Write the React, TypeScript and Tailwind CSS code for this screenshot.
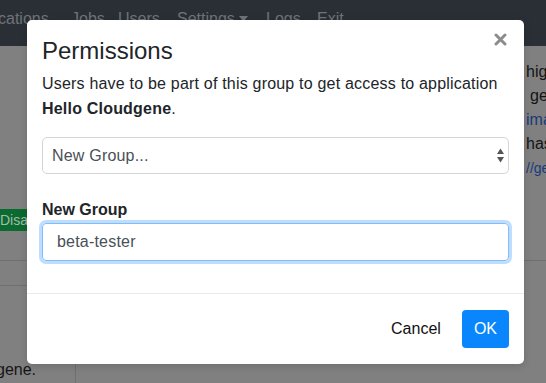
export default function App() {
  return (
    <div className="relative h-[383px] w-[546px] overflow-hidden bg-[#808080] font-['Liberation_Sans',Arial,sans-serif] text-[16px] text-[#141414]">
      <nav className="flex h-[46px] items-start bg-[#2a2f36] pt-[7px] text-[16px] leading-[24px] text-[#6f7378]">
        <span className="-ml-[2px] w-[73px]">cations</span>
        <span className="w-[47px]">Jobs</span>
        <span className="w-[59px]">Users</span>
        <span className="flex w-[89px] items-center gap-[4px]">
          Settings
          <svg width="9" height="6" viewBox="0 0 9 6"><path d="M0 0h9L4.5 5.5z" fill="currentColor" /></svg>
        </span>
        <span className="w-[51px]">Logs</span>
        <span>Exit</span>
      </nav>

      <div className="flex h-[214px]">
        <div className="flex w-[75px] flex-col pt-[163px]">
          <div className="flex h-[22px] w-[75px] items-center bg-[#0b6a2f] text-[14px] text-[#a3bba9]">
            <span>Disa</span>
          </div>
        </div>
        <div className="flex flex-col pl-[451px] pt-[14px] leading-[24px]">
          <span>hig</span>
          <span className="pl-[4px]">ge</span>
          <span className="text-[#1a3a7a]">ima</span>
          <span>has</span>
          <span className="text-[14px] text-[#1a3a7a]">//ge</span>
        </div>
      </div>
      <div className="h-[1px] bg-[#6f6f6f]" />
      <div className="h-[25px] w-[75px] border-b border-[#6f6f6f]" />
      <div className="flex h-[97px]">
        <div className="flex w-[76px] flex-col justify-end border-r border-[#6f6f6f] pb-[1px]">
          <span className="-ml-[4px] leading-[24px]">gene.</span>
        </div>
      </div>

      <div className="absolute left-[27px] top-[20px] w-[497px] rounded-[5px] bg-white text-[#212529] shadow-[0_2px_8px_rgba(0,0,0,0.15)]">
        <div className="flex items-start justify-between px-[15px] pt-[16px]">
          <h4 className="text-[24px] leading-[29px] font-normal">Permissions</h4>
          <svg className="mr-[2px] -mt-[3px]" width="13" height="13" viewBox="0 0 13 13">
            <path d="M2 2l9 9M11 2l-9 9" stroke="#8c8c8c" strokeWidth="3" strokeLinecap="round" />
          </svg>
        </div>
        <div className="px-[15px] pb-[32px] pt-[7px] tracking-[0.2px]">
          <p className="leading-[24.5px]">
            Users have to be part of this group to get access to application <b>Hello Cloudgene</b>.
          </p>
          <div className="mt-[16px] flex h-[37px] items-center justify-between rounded-[5px] border border-[#d3d6d9] pl-[9px] pr-[4px] text-[#495057]">
            <span>New Group...</span>
            <svg width="7" height="15" viewBox="0 0 7 15">
              <path d="M3.5 0.5L7 6h-7z M3.5 14.5L7 9h-7z" fill="#555" />
            </svg>
          </div>
          <label className="mt-[24px] block font-bold leading-[24px] tracking-normal">New Group</label>
          <div className="mt-[1px] flex h-[38px] items-center rounded-[4px] border border-[#80bdff] pl-[14px] text-[#495057] shadow-[0_0_0_3px_rgba(0,123,255,0.25)]">
            beta-tester
          </div>
        </div>
        <div className="flex items-center justify-end border-t border-[#e9ecef] px-[15px] py-[16px]">
          <span className="mr-[21px] text-[#111]">Cancel</span>
          <div className="flex h-[38px] items-center rounded-[4px] bg-[#0a86fc] px-[12px] text-white">OK</div>
        </div>
      </div>
    </div>
  );
}
